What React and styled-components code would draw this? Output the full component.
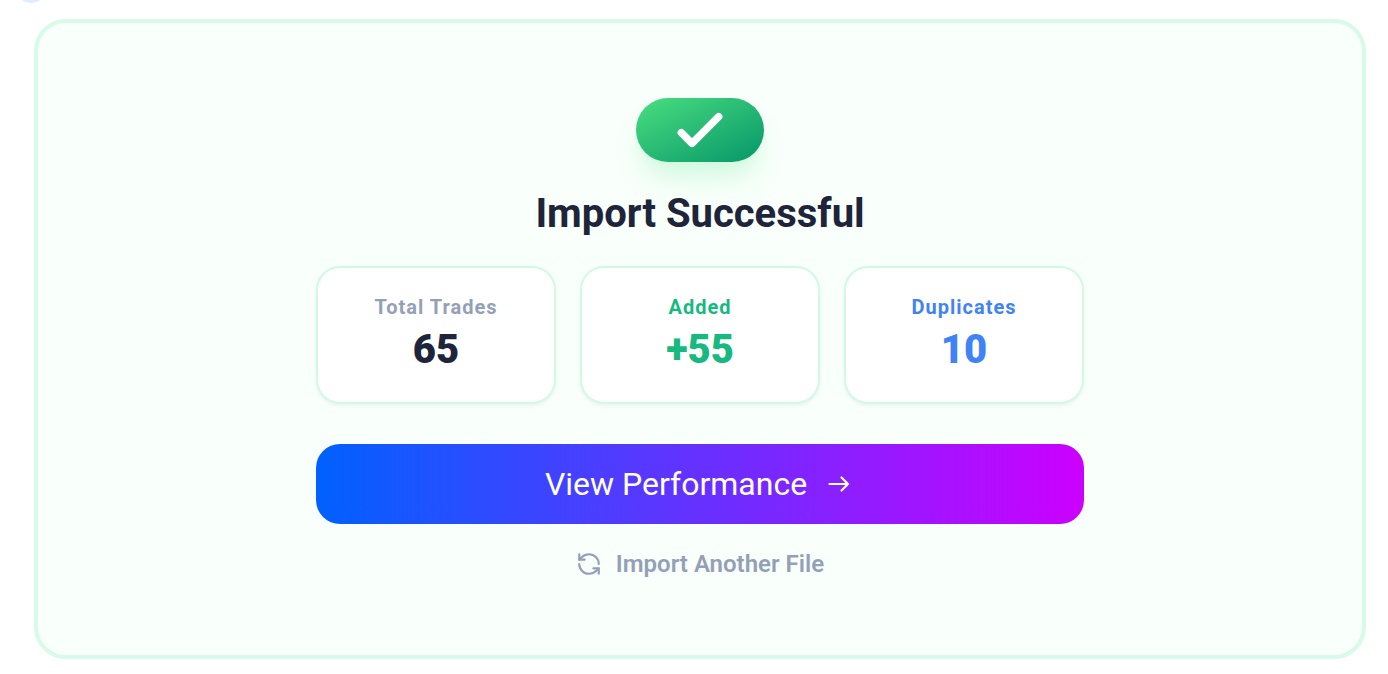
import React from 'react';
import styled, { createGlobalStyle } from 'styled-components';
import { RefreshCcw } from 'lucide-react';

const stats = [
  { label: 'Total Trades', value: '65', labelColor: '#94a0b8', valueColor: '#1e2439' },
  { label: 'Added', value: '+55', labelColor: '#17b981', valueColor: '#17b981' },
  { label: 'Duplicates', value: '10', labelColor: '#3f83f6', valueColor: '#3f83f6' },
];

function App() {
  return (
    <Page>
      <GlobalStyle />
      <StepDot />
      <Panel>
        <Badge>
          <svg width="64" height="64" viewBox="0 0 24 24" fill="none" stroke="currentColor" strokeWidth="2.8" strokeLinecap="round" strokeLinejoin="round" aria-hidden="true">
            <path d="M5 13l4 4L19 7" />
          </svg>
        </Badge>
        <Title>Import Successful</Title>
        <Content>
          <Stats>
            {stats.map(stat => (
              <StatCard key={stat.label}>
                <StatLabel $color={stat.labelColor}>{stat.label}</StatLabel>
                <StatValue $color={stat.valueColor}>{stat.value}</StatValue>
              </StatCard>
            ))}
          </Stats>
          <PrimaryButton type="button">
            View Performance
            <svg width="28" height="24" viewBox="0 0 28 24" fill="none" stroke="currentColor" strokeWidth="2.2" strokeLinecap="round" strokeLinejoin="round" aria-hidden="true">
              <path d="M14.5 5.5 21 12l-6.5 6.5M21 12H2.5" />
            </svg>
          </PrimaryButton>
          <TextButton type="button">
            <RefreshCcw size={26} strokeWidth={2} aria-hidden="true" />
            Import Another File
          </TextButton>
        </Content>
      </Panel>
    </Page>
  );
}

const GlobalStyle = createGlobalStyle`
* { box-sizing: border-box; }
body {
  margin: 0;
  background: #ffffff;
  font-family: Roboto, sans-serif;
}
`

const Page = styled.main`
position: relative;
padding: 19px 22px 15px 34px;
overflow: hidden;
`

const StepDot = styled.span`
position: absolute;
top: -29px;
left: 15px;
width: 32px;
height: 32px;
border-radius: 50%;
background: #dfecfe;
`

const Panel = styled.section`
display: flex;
flex-direction: column;
align-items: center;
padding: 75px 32px;
border: 4px solid #d8fbe9;
border-radius: 32px;
background: #f9fffb;
`

const Badge = styled.div`
display: flex;
justify-content: center;
width: 128px;
border-radius: 32px;
color: #ffffff;
background: linear-gradient(to bottom right, #4ade80, #059669);
box-shadow: 0 20px 30px -6px #d0f9de, 0 8px 12px -8px #bbf7d0;
`

const Title = styled.h1`
margin: 24px 0;
font-size: 40px;
line-height: 56px;
font-weight: 700;
color: #1e2439;
`

const Content = styled.div`
display: flex;
flex-direction: column;
align-items: center;
width: 100%;
max-width: 768px;
`

const Stats = styled.dl`
display: grid;
grid-template-columns: repeat(3, 1fr);
gap: 24px;
width: 100%;
margin: 0 0 40px;
`

const StatCard = styled.div`
padding: 24px;
border: 2px solid #d1fae5;
border-radius: 24px;
background: #ffffff;
text-align: center;
box-shadow: 0 2px 4px rgba(0, 0, 0, 0.05);
`

const StatLabel = styled.dt`
font-size: 20px;
line-height: 30px;
font-weight: 700;
letter-spacing: 1px;
color: ${props => props.$color};
`

const StatValue = styled.dd`
margin: 0;
font-size: 40px;
line-height: 56px;
font-weight: 900;
color: ${props => props.$color};
`

const PrimaryButton = styled.button`
display: flex;
align-items: center;
justify-content: center;
gap: 20px;
width: 100%;
padding: 16px 32px;
border: none;
border-radius: 24px;
background: linear-gradient(to right, #0061ff, #cc00ff);
color: #ffffff;
font-family: inherit;
font-size: 32px;
line-height: 48px;
cursor: pointer;
`

const TextButton = styled.button`
display: flex;
align-items: center;
gap: 14px;
margin-top: 24px;
padding: 0;
border: none;
background: none;
color: #94a0b8;
font-family: inherit;
font-size: 24px;
line-height: 32px;
font-weight: 600;
cursor: pointer;
`

export default App;
